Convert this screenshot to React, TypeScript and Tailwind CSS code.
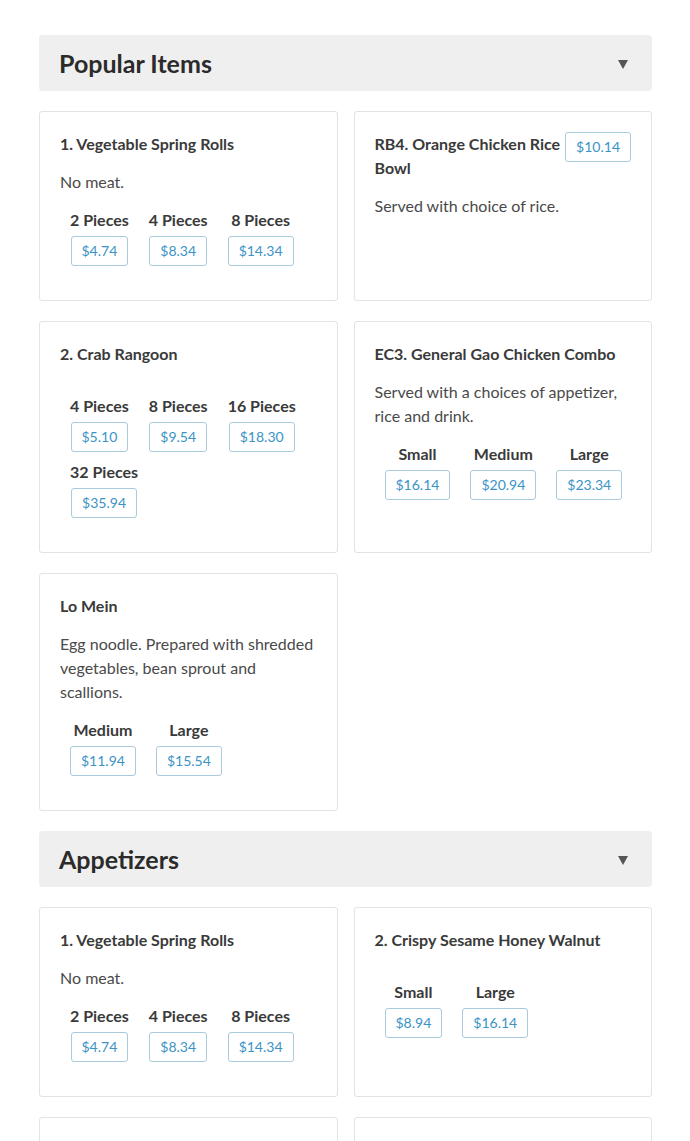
import React from "react";

type Price = { label?: string; price: string };
type Item = { title: string; desc?: string; single?: string; prices?: Price[] };

const popular: Item[] = [
  {
    title: "1. Vegetable Spring Rolls",
    desc: "No meat.",
    prices: [
      { label: "2 Pieces", price: "$4.74" },
      { label: "4 Pieces", price: "$8.34" },
      { label: "8 Pieces", price: "$14.34" },
    ],
  },
  {
    title: "RB4. Orange Chicken Rice Bowl",
    desc: "Served with choice of rice.",
    single: "$10.14",
  },
  {
    title: "2. Crab Rangoon",
    prices: [
      { label: "4 Pieces", price: "$5.10" },
      { label: "8 Pieces", price: "$9.54" },
      { label: "16 Pieces", price: "$18.30" },
      { label: "32 Pieces", price: "$35.94" },
    ],
  },
  {
    title: "EC3. General Gao Chicken Combo",
    desc: "Served with a choices of appetizer, rice and drink.",
    prices: [
      { label: "Small", price: "$16.14" },
      { label: "Medium", price: "$20.94" },
      { label: "Large", price: "$23.34" },
    ],
  },
  {
    title: "Lo Mein",
    desc: "Egg noodle. Prepared with shredded vegetables, bean sprout and scallions.",
    prices: [
      { label: "Medium", price: "$11.94" },
      { label: "Large", price: "$15.54" },
    ],
  },
];

const appetizers: Item[] = [
  {
    title: "1. Vegetable Spring Rolls",
    desc: "No meat.",
    prices: [
      { label: "2 Pieces", price: "$4.74" },
      { label: "4 Pieces", price: "$8.34" },
      { label: "8 Pieces", price: "$14.34" },
    ],
  },
  {
    title: "2. Crispy Sesame Honey Walnut",
    prices: [
      { label: "Small", price: "$8.94" },
      { label: "Large", price: "$16.14" },
    ],
  },
  {
    title: "2. Crab Rangoon",
    prices: [
      { label: "4 Pieces", price: "$5.10" },
      { label: "8 Pieces", price: "$9.54" },
      { label: "16 Pieces", price: "$18.30" },
    ],
  },
  {
    title: "3. Fried Dumplings",
    prices: [
      { label: "6 Pieces", price: "$7.14" },
      { label: "12 Pieces", price: "$13.14" },
    ],
  },
];

function PriceButton({ price }: { price: string }) {
  return (
    <span className="inline-block rounded-[3px] border border-[#a9cbdb] bg-white px-[10px] py-[4px] text-[14px] leading-[20px] text-[#3b93c6]">
      {price}
    </span>
  );
}

function Card({ item }: { item: Item }) {
  return (
    <div className="flex flex-col rounded-[3px] border border-[#e3e3e3] bg-white px-5 pt-5 pb-[34px]">
      <div className="mb-[14px] flex items-start justify-between">
        <h3 className="min-w-0 flex-1 text-[16px] font-bold leading-[24px] text-[#3a3a3a]">{item.title}</h3>
        {item.single && (
          <div className="shrink-0">
            <PriceButton price={item.single} />
          </div>
        )}
      </div>
      <p className="mb-[14px] text-[16px] leading-[24px] text-[#4a4a4a]">{item.desc ?? ""}</p>
      {item.prices && (
        <div className="mr-[-12px] flex flex-wrap gap-y-2">
          {item.prices.map((p) => (
            <div key={p.label} className="mx-[10px] flex flex-col items-center">
              <span className="text-[16px] font-bold leading-[24px] text-[#3a3a3a]">{p.label}</span>
              <div className="mt-[4px]">
                <PriceButton price={p.price} />
              </div>
            </div>
          ))}
        </div>
      )}
    </div>
  );
}

function Section({ title, items }: { title: string; items: Item[] }) {
  return (
    <section className="mb-5">
      <div className="mb-5 flex h-[56px] items-center justify-between rounded-[4px] bg-[#efefef] pl-5 pr-[24px]">
        <h2 className="text-[25px] font-bold leading-[32px] text-[#2b2b2b]">{title}</h2>
        <svg width="10" height="10" viewBox="0 0 10 10" className="mt-[1px]">
          <path d="M0 1 L10 1 L5 10 Z" fill="#555555" />
        </svg>
      </div>
      <div className="grid grid-cols-2 gap-x-4 gap-y-5">
        {items.map((it, i) => (
          <Card key={i} item={it} />
        ))}
      </div>
    </section>
  );
}

export default function App() {
  return (
    <div
      className="min-h-screen bg-white pt-[35px] pl-[39px] pr-[38px]"
      style={{ fontFamily: "Lato, 'Noto Sans', sans-serif" }}
    >
      <Section title="Popular Items" items={popular} />
      <Section title="Appetizers" items={appetizers} />
    </div>
  );
}
